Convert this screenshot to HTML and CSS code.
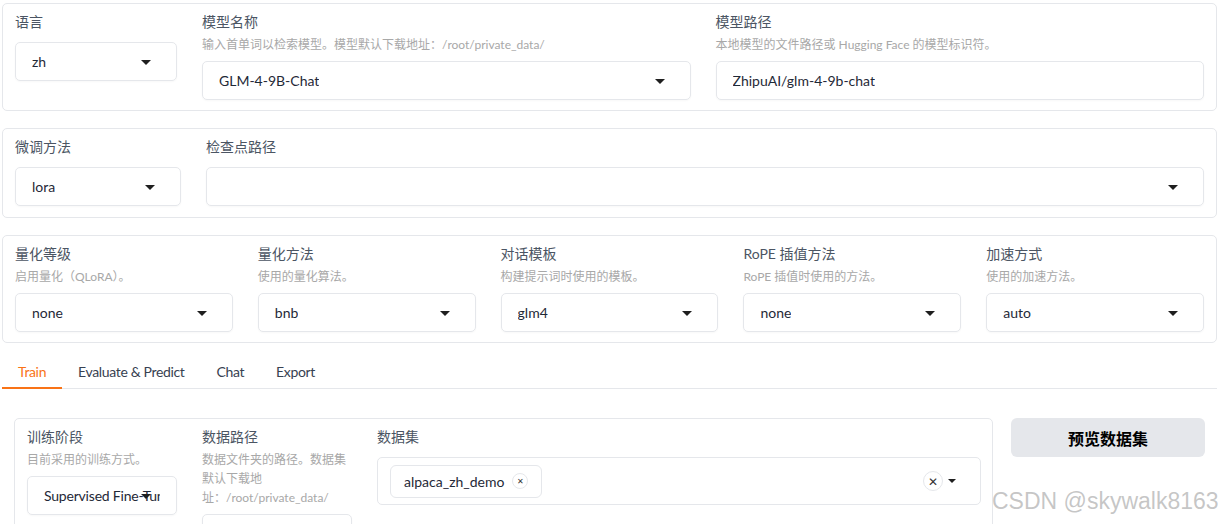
FILE: index.html
```html
<!DOCTYPE html>
<html lang="zh">
<head>
    <meta charset="UTF-8">
    <title>LLaMA Board</title>
    <link rel="stylesheet" href="styles.css">
</head>
<body>
<div class="page">

    <div class="block row-top">
        <div class="field">
            <div class="label">语言</div>
            <div class="select"><span class="value">zh</span><span class="arrow"></span></div>
        </div>
        <div class="field">
            <div class="label">模型名称</div>
            <div class="hint">输入首单词以检索模型。模型默认下载地址：<span class="latin">/root/private_data/</span></div>
            <div class="select"><span class="value">GLM-4-9B-Chat</span><span class="arrow"></span></div>
        </div>
        <div class="field">
            <div class="label">模型路径</div>
            <div class="hint">本地模型的文件路径或 <span class="latin">Hugging Face</span> 的模型标识符。</div>
            <div class="select"><span class="value">ZhipuAI/glm-4-9b-chat</span></div>
        </div>
    </div>

    <div class="block row-mid">
        <div class="field">
            <div class="label">微调方法</div>
            <div class="select"><span class="value">lora</span><span class="arrow"></span></div>
        </div>
        <div class="field">
            <div class="label">检查点路径</div>
            <div class="select"><span class="value"></span><span class="arrow"></span></div>
        </div>
    </div>

    <div class="block row-five">
        <div class="field">
            <div class="label">量化等级</div>
            <div class="hint">启用量化（<span class="latin">QLoRA</span>）。</div>
            <div class="select"><span class="value">none</span><span class="arrow"></span></div>
        </div>
        <div class="field">
            <div class="label">量化方法</div>
            <div class="hint">使用的量化算法。</div>
            <div class="select"><span class="value">bnb</span><span class="arrow"></span></div>
        </div>
        <div class="field">
            <div class="label">对话模板</div>
            <div class="hint">构建提示词时使用的模板。</div>
            <div class="select"><span class="value">glm4</span><span class="arrow"></span></div>
        </div>
        <div class="field">
            <div class="label">RoPE 插值方法</div>
            <div class="hint"><span class="latin">RoPE</span> 插值时使用的方法。</div>
            <div class="select"><span class="value">none</span><span class="arrow"></span></div>
        </div>
        <div class="field">
            <div class="label">加速方式</div>
            <div class="hint">使用的加速方法。</div>
            <div class="select"><span class="value">auto</span><span class="arrow"></span></div>
        </div>
    </div>

    <nav class="tabs">
        <a class="tab active">Train</a>
        <a class="tab">Evaluate &amp; Predict</a>
        <a class="tab">Chat</a>
        <a class="tab">Export</a>
    </nav>

    <div class="tab-body">
        <div class="block row-train">
            <div class="field">
                <div class="label">训练阶段</div>
                <div class="hint">目前采用的训练方式。</div>
                <div class="select"><span class="value narrow">Supervised Fine-Tuning</span><span class="arrow"></span></div>
            </div>
            <div class="field">
                <div class="label">数据路径</div>
                <div class="hint">数据文件夹的路径。数据集默认下载地址：<span class="latin">/root/private_data/</span></div>
                <div class="select"><span class="value">data</span></div>
            </div>
            <div class="field">
                <div class="label">数据集</div>
                <div class="multi">
                    <span class="chip">alpaca_zh_demo <span class="x small">&#x2715;</span></span>
                    <span class="multi-tools"><span class="x big">&#x2715;</span><span class="arrow"></span></span>
                </div>
            </div>
        </div>
        <button class="preview">预览数据集</button>
    </div>

</div>
<div class="watermark">CSDN @skywalk8163</div>
</body>
</html>
```

FILE: styles.css
```css
body {
    margin: 0;
    padding: 3px 3px 0 2px;
    background-color: white;
    font-family: "Source Sans Pro", Lato, "Noto Sans CJK SC", sans-serif;
    font-size: 14px;
    color: #1f2937;
    overflow: hidden;
    height: 521px;
}

.block {
    border: 1px solid #e5e7eb;
    border-radius: 5px;
    padding: 8px 12px 10px 12px;
    background-color: white;
}

.row-top {
    display: grid;
    grid-template-columns: 162px 1fr 1fr;
    column-gap: 25px;
}
.row-mid {
    display: grid;
    grid-template-columns: 166px 1fr;
    column-gap: 25px;
    margin-top: 17px;
    padding-bottom: 11px;
}
.row-five {
    display: grid;
    grid-template-columns: repeat(5, 1fr);
    column-gap: 25px;
    margin-top: 17px;
}

.label {
    line-height: 20px;
    color: #4b5563;
    margin-bottom: 10px;
}
.hint {
    font-size: 12px;
    line-height: 19px;
    color: #a8a8a8;
    margin-top: -7px;
    margin-bottom: 7px;
}

.select {
    position: relative;
    height: 37px;
    border: 1px solid #e5e7eb;
    border-radius: 5px;
    padding: 0 16px;
    display: flex;
    align-items: center;
    overflow: hidden;
    white-space: nowrap;
    box-shadow: 0 1px 2px rgba(0, 0, 0, 0.03);
}
.select .value {
    overflow: hidden;
}
.select .value.narrow {
    letter-spacing: -0.2px;
}
.arrow {
    width: 0;
    height: 0;
    border-left: 5px solid transparent;
    border-right: 5px solid transparent;
    border-top: 5px solid #1f1f1f;
}
.select .arrow {
    position: absolute;
    right: 25px;
    top: 17px;
}

.tabs {
    display: flex;
    margin-top: 14px;
    border-bottom: 1px solid #e5e7eb;
}
.tab {
    padding: 6px 16px 7px 16px;
    line-height: 17px;
    color: #374151;
    letter-spacing: -0.35px;
    cursor: pointer;
}
.tab.active {
    color: #f97316;
    border-bottom: 2px solid #f97316;
    margin-bottom: -1px;
}

.tab-body {
    display: grid;
    grid-template-columns: 1fr 194px;
    column-gap: 18px;
    padding: 29px 12px 0 12px;
    align-items: start;
}

.row-train {
    display: grid;
    grid-template-columns: 150px 150px 1fr;
    column-gap: 25px;
    padding-right: 11px;
    height: 200px;
}

.multi {
    height: 46px;
    border: 1px solid #e5e7eb;
    border-radius: 5px;
    display: flex;
    align-items: center;
    justify-content: space-between;
    padding: 0 24px 0 12px;
}
.chip {
    display: flex;
    align-items: center;
    gap: 8px;
    height: 31px;
    padding: 0 13px 0 13px;
    border: 1px solid #e5e7eb;
    border-radius: 6px;
}
.x {
    display: inline-flex;
    align-items: center;
    justify-content: center;
    border: 1px solid #e5e7eb;
    border-radius: 50%;
    color: #333;
}
.x.small {
    width: 14px;
    height: 14px;
    font-size: 8px;
}
.x.big {
    width: 18px;
    height: 18px;
    font-size: 12px;
}
.multi-tools {
    display: flex;
    align-items: center;
    gap: 5px;
}
.multi-tools .arrow {
    border-left-width: 4px;
    border-right-width: 4px;
    border-top-width: 4px;
}

.preview {
    height: 39px;
    border: none;
    border-radius: 6px;
    background-color: #e5e7eb;
    color: black;
    font-family: "Noto Sans CJK SC", sans-serif;
    font-weight: bold;
    font-size: 16px;
    cursor: pointer;
}

.watermark {
    position: absolute;
    left: 992px;
    top: 488px;
    font-family: "Liberation Sans", Arial, sans-serif;
    font-size: 23px;
    color: rgba(160, 160, 160, 0.6);
    white-space: nowrap;
}
```
